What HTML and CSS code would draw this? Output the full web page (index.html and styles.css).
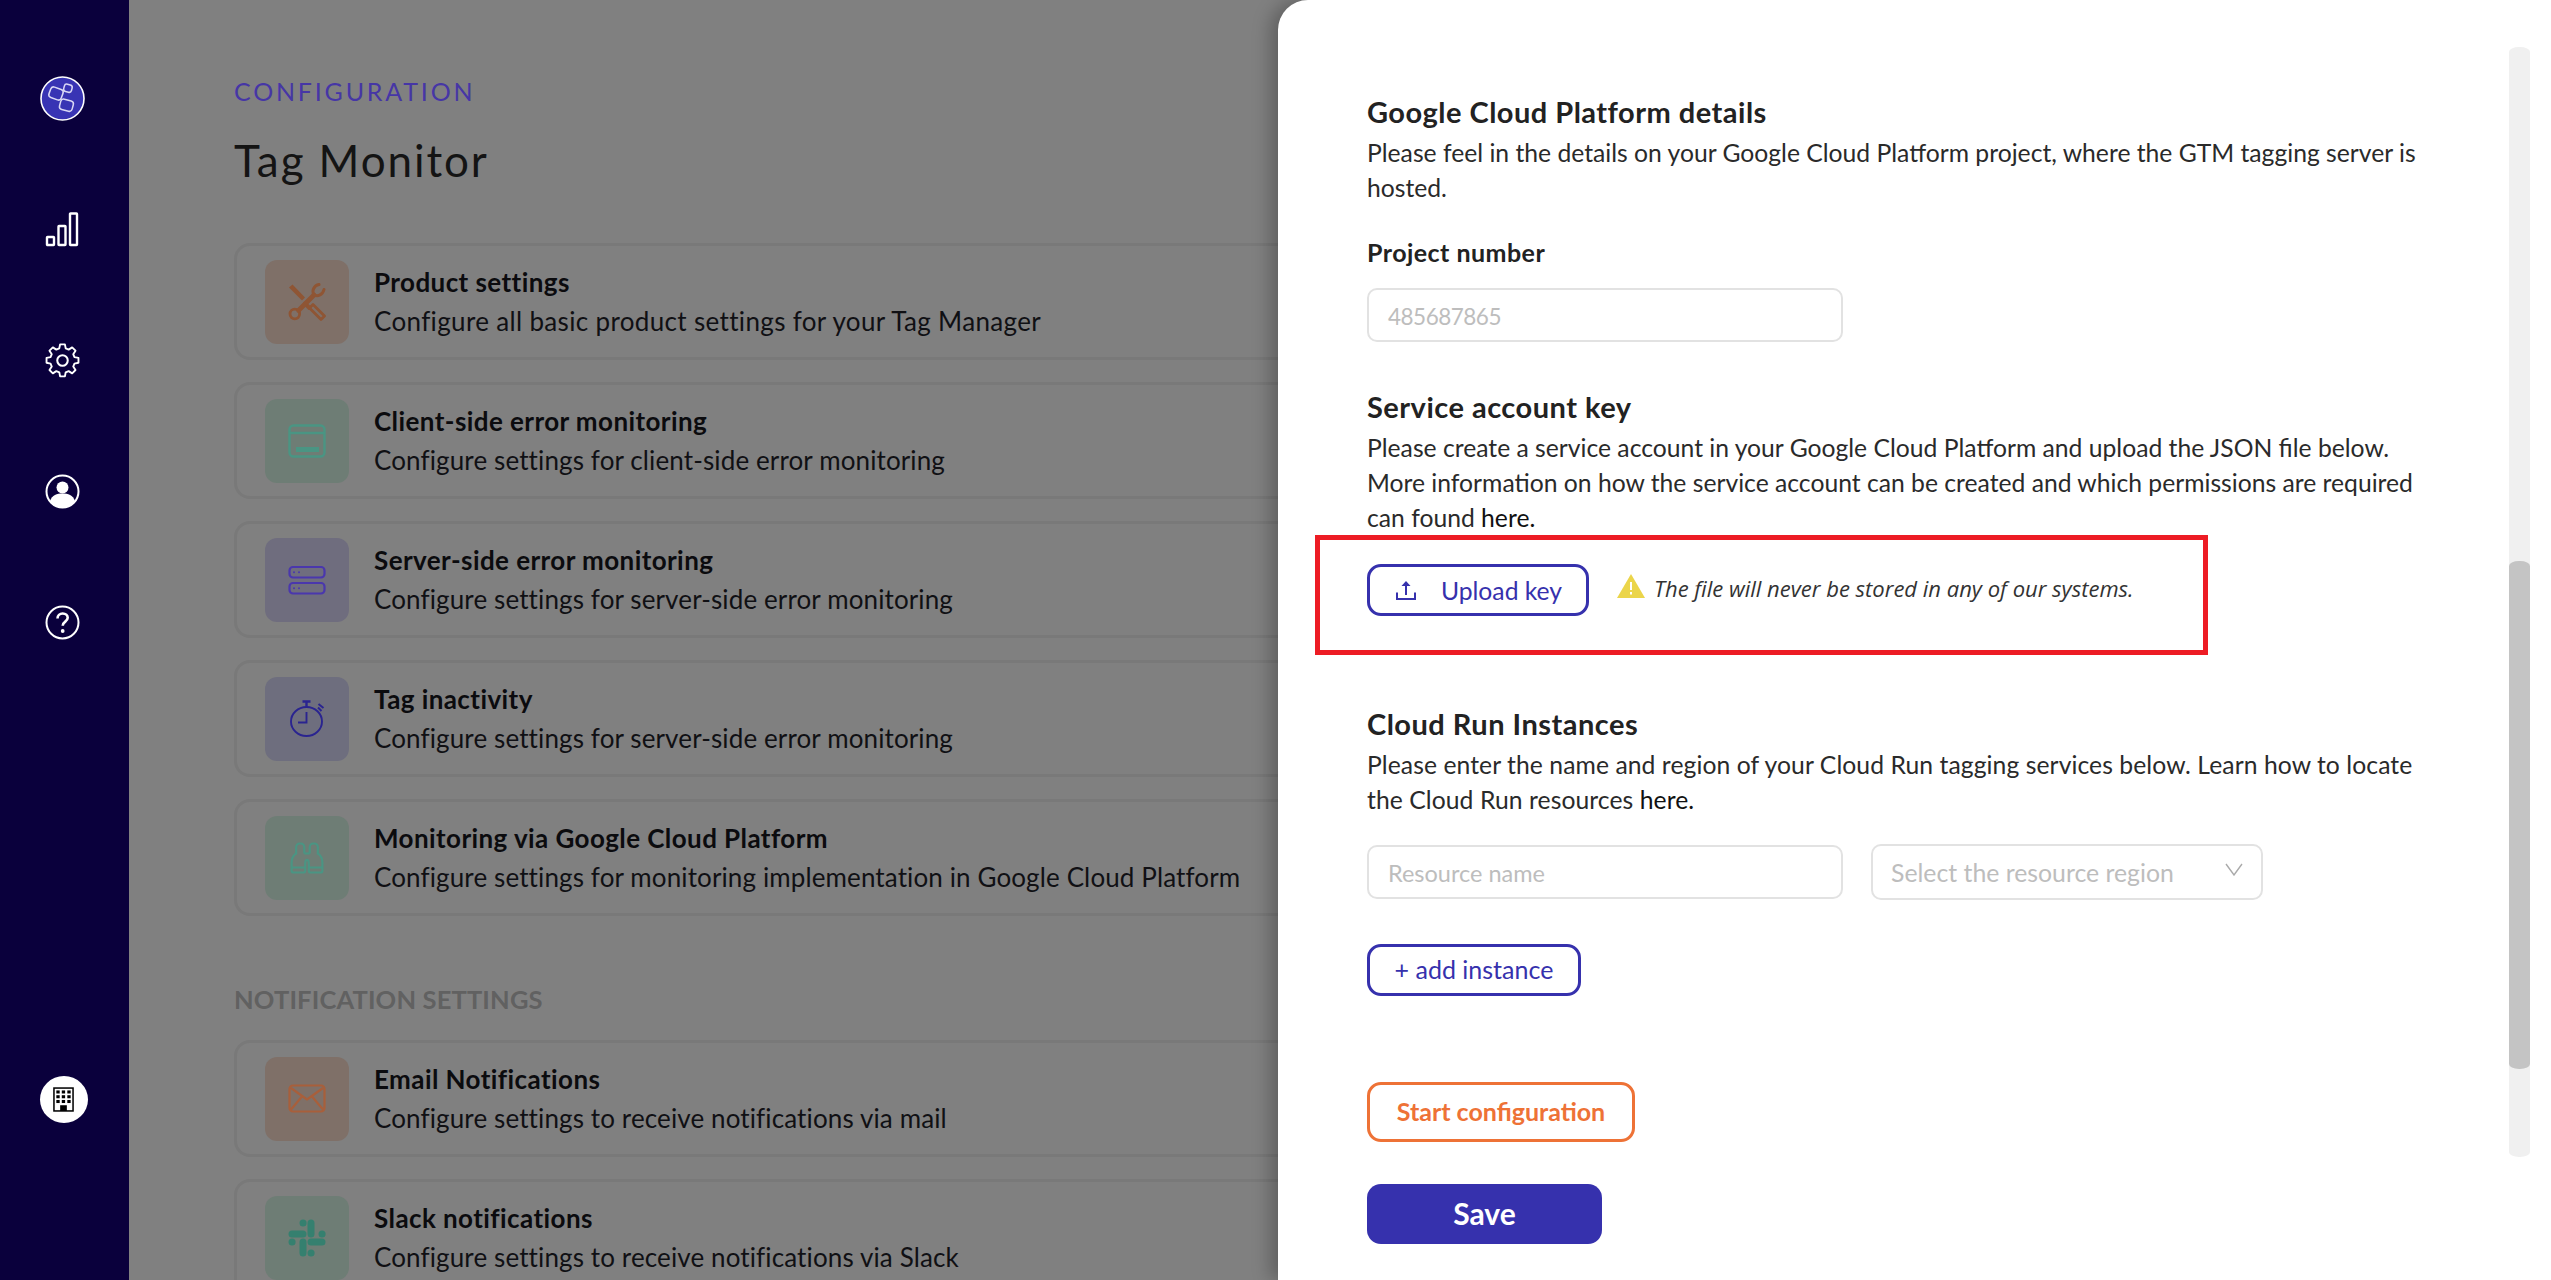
FILE: index.html
```html
<!DOCTYPE html>
<html lang="en">
<head>
<meta charset="utf-8">
<title>Tag Monitor</title>
<link rel="stylesheet" href="styles.css">
</head>
<body>
<div class="app">
  <nav class="sidebar">
    <svg class="nav-logo" viewBox="0 0 45 45"><circle cx="22.5" cy="22.5" r="21.5" fill="#3834b4" stroke="#fff" stroke-width="1.6"/><g fill="none" stroke="#d9d8f5" stroke-width="1.5"><rect x="9.5" y="12" width="13" height="11" rx="3" transform="rotate(20 16 17.5)"/><rect x="24" y="8.5" width="8" height="7.5" rx="2.5" transform="rotate(15 28 12)"/><rect x="20" y="24" width="13" height="10.5" rx="3" transform="rotate(15 26.5 29)"/></g></svg>
    <svg class="nav-icon" viewBox="0 0 35 35"><g fill="none" stroke="#fff" stroke-width="2.4"><rect x="2" y="25" width="7" height="8" rx=".5"/><rect x="13.500" y="14" width="7" height="19" rx=".5"/><rect x="25" y="1.500" width="7" height="31.500" rx=".5"/></g></svg>
    <svg class="nav-icon" viewBox="0 0 24 24"><g fill="none" stroke="#fff" stroke-width="1.4" stroke-linejoin="round"><circle cx="12" cy="12" r="3.6"/><path d="M10.2 1.5h3.6l.6 3 2.2.9 2.6-1.7 2.5 2.5-1.7 2.6.9 2.2 3 .6v3.6l-3 .6-.9 2.2 1.7 2.6-2.5 2.5-2.6-1.7-2.2.9-.6 3h-3.6l-.6-3-2.2-.9-2.6 1.7-2.5-2.5 1.7-2.6-.9-2.2-3-.6v-3.6l3-.6.9-2.2-1.7-2.6 2.5-2.5 2.6 1.7 2.2-.9z" transform="translate(12 12) scale(.92) translate(-12 -13.5)"/></g></svg>
    <svg class="nav-icon" viewBox="0 0 35 35"><circle cx="17.5" cy="17.5" r="16" fill="none" stroke="#fff" stroke-width="2"/><circle cx="17.5" cy="13.5" r="6" fill="#fff"/><path d="M5 27c2-6 7-7.500 12.500-7.500S28 21 30 27c-3 4-7.500 6.500-12.500 6.500S8 31 5 27z" fill="#fff"/></svg>
    <svg class="nav-icon" viewBox="0 0 35 35"><circle cx="17.5" cy="17.5" r="16" fill="none" stroke="#fff" stroke-width="2"/><path d="M12.500 13.500c0-3 2.200-5 5.200-5s5 1.800 5 4.300c0 4-5 3.700-5 8" fill="none" stroke="#fff" stroke-width="2.600"/><circle cx="17.700" cy="26" r="1.900" fill="#fff"/></svg>
    <div class="nav-org">
      <svg class="org-icon" viewBox="0 0 22 26"><rect x="1" y="1" width="20" height="24" fill="#fff" stroke="#000" stroke-width="1.600"/><g fill="#000"><rect x="3.500" y="3.500" width="3.500" height="3.200"/><rect x="9.200" y="3.500" width="3.500" height="3.200"/><rect x="15" y="3.500" width="3.500" height="3.200"/><rect x="3.500" y="8.500" width="3.500" height="3.200"/><rect x="9.200" y="8.500" width="3.500" height="3.200"/><rect x="15" y="8.500" width="3.500" height="3.200"/><rect x="3.500" y="13.500" width="3.500" height="3.200"/><rect x="9.200" y="13.500" width="3.500" height="3.200"/><rect x="15" y="13.500" width="3.500" height="3.200"/><rect x="7.500" y="19" width="7" height="6"/></g></svg>
    </div>
  </nav>

  <main class="main">
    <p class="eyebrow">CONFIGURATION</p>
    <h1 class="page-title">Tag Monitor</h1>
    <div class="card-list">
      <div class="card">
        <div class="tile tile-orange">
          <svg class="tile-icon" viewBox="0 0 38 38"><path d="M1 4.500L4.500 1.500 17 14.500 14 17.500z" fill="#8f5534"/><g fill="none" stroke="#8f5534" stroke-linecap="round" stroke-linejoin="round"><path d="M21.500 25l3.500-3.500 11.500 11.500-3.500 3.500z" stroke-width="2.800"/><path d="M17 20.500l4.500 4.500" stroke-width="4"/><circle cx="6.800" cy="31" r="4.800" stroke-width="2.800"/><path d="M10.500 27.500L26 12" stroke-width="4.600"/><path d="M31 1.500c-5 .8-7.500 6.500-5 10 3 2.500 8.500 1 10-5" stroke-width="3"/></g></svg>
        </div>
        <div class="card-text"><h3 class="card-title">Product settings</h3><p class="card-desc card-desc-wide">Configure all basic product settings for your Tag Manager</p></div>
      </div>
      <div class="card">
        <div class="tile tile-teal">
          <svg class="tile-icon" viewBox="0 0 38 38"><g fill="none" stroke="#4a9583" stroke-width="2.400"><rect x="1.500" y="3.500" width="35" height="31" rx="4"/><path d="M1.500 11h35"/></g><rect x="8" y="25" width="23" height="5" fill="#4a9583"/></svg>
        </div>
        <div class="card-text"><h3 class="card-title">Client-side error monitoring</h3><p class="card-desc">Configure settings for client-side error monitoring</p></div>
      </div>
      <div class="card">
        <div class="tile tile-purple">
          <svg class="tile-icon" viewBox="0 0 38 38"><g fill="none" stroke="#4a37ad" stroke-width="2.200"><rect x="1.500" y="6" width="35" height="10.500" rx="3.500"/><rect x="1.500" y="22" width="35" height="10.500" rx="3.500"/></g><g fill="#4a37ad"><circle cx="6" cy="11.200" r="1"/><circle cx="11" cy="11.200" r="1"/><circle cx="6" cy="27.200" r="1"/><circle cx="11" cy="27.200" r="1"/></g></svg>
        </div>
        <div class="card-text"><h3 class="card-title">Server-side error monitoring</h3><p class="card-desc">Configure settings for server-side error monitoring</p></div>
      </div>
      <div class="card">
        <div class="tile tile-indigo">
          <svg class="tile-icon" viewBox="0 0 38 38"><g fill="none" stroke="#2a2490" stroke-width="1.900"><ellipse cx="18.500" cy="21.500" rx="15.500" ry="14.500"/><path d="M18.500 12v10.500h-8.500"/><path d="M18.500 6.500V2M14.500 1.500h8" stroke-width="2.400"/><path d="M30 7.500l3.500 3.500M30.500 4l5 4" stroke-width="2"/></g></svg>
        </div>
        <div class="card-text"><h3 class="card-title">Tag inactivity</h3><p class="card-desc">Configure settings for server-side error monitoring</p></div>
      </div>
      <div class="card">
        <div class="tile tile-teal">
          <svg class="tile-icon" viewBox="-2 0 42 38"><g fill="none" stroke="#4a9583" stroke-width="2.400" stroke-linejoin="round"><path d="M7 15V7a4 4 0 0 1 4-4h1a4 4 0 0 1 4 4v7"/><path d="M22 14V7a4 4 0 0 1 4-4h1a4 4 0 0 1 4 4v8"/><path d="M16 14h6"/><path d="M7 14c-3.500 2.500-5 6-5 10v9a2 2 0 0 0 2 2h11a2 2 0 0 0 2-2v-8c0-2.500.5-4 2-4s2 1.500 2 4v8a2 2 0 0 0 2 2h11a2 2 0 0 0 2-2v-9c0-4-1.500-7.500-5-10"/><path d="M2 29.500h15M21 29.500h15"/></g></svg>
        </div>
        <div class="card-text"><h3 class="card-title">Monitoring via Google Cloud Platform</h3><p class="card-desc">Configure settings for monitoring implementation in Google Cloud Platform</p></div>
      </div>
    </div>
    <h2 class="section-label">NOTIFICATION SETTINGS</h2>
    <div class="card-list">
      <div class="card">
        <div class="tile tile-orange">
          <svg class="tile-icon" viewBox="0 0 38 38"><g fill="none" stroke="#a85f3b" stroke-width="2.200" stroke-linejoin="round"><rect x="1.500" y="5.500" width="35" height="26" rx="3.500"/><path d="M3 8l16 11.500L35 8M3 29.500l11-13M35 29.500l-11-13"/></g></svg>
        </div>
        <div class="card-text"><h3 class="card-title">Email Notifications</h3><p class="card-desc">Configure settings to receive notifications via mail</p></div>
      </div>
      <div class="card">
        <div class="tile tile-teal">
          <svg class="tile-icon" viewBox="0 0 38 38"><g fill="none" stroke="#35806f" stroke-width="7" stroke-linecap="round"><path d="M4 15h11M23 4v11M34 15h.1M4 23h.1M23 23h11M15 23v11M15 4h.1M23 34h.1"/></g></svg>
        </div>
        <div class="card-text"><h3 class="card-title">Slack notifications</h3><p class="card-desc">Configure settings to receive notifications via Slack</p></div>
      </div>
    </div>
  </main>

  <aside class="panel">
    <h2 class="panel-heading">Google Cloud Platform details</h2>
    <p class="panel-text">Please feel in the details on your Google Cloud Platform project, where the GTM tagging server is<br>hosted.</p>
    <label class="field-label">Project number</label>
    <div class="input input-project">485687865</div>

    <h2 class="panel-heading heading-key">Service account key</h2>
    <p class="panel-text">Please create a service account in your Google Cloud Platform and upload the JSON file below.<br>More information on how the service account can be created and which permissions are required<br>can found <span class="link">here.</span></p>
    <div class="upload-row">
      <div class="highlight"></div>
      <button class="btn btn-outline btn-upload">
        <svg class="upload-icon" viewBox="0 0 20 19"><g fill="none" stroke="#3631ad" stroke-width="2"><path d="M1 11.500V18h18v-6.500"/><path d="M10 14V3"/></g><path d="M10 0l4.500 5h-9z" fill="#3631ad"/></svg>
        Upload key
      </button>
      <svg class="warn-icon" viewBox="0 0 28 24"><path d="M14 0l14 24H0z" fill="#ebd54a"/><rect x="13" y="8" width="2" height="8" fill="#fff"/><rect x="13" y="18" width="2" height="2.500" fill="#fff"/></svg>
      <em class="upload-note">The file will never be stored in any of our systems.</em>
    </div>

    <h2 class="panel-heading heading-cloud">Cloud Run Instances</h2>
    <p class="panel-text panel-text-wide">Please enter the name and region of your Cloud Run tagging services below. Learn how to locate<br>the Cloud Run resources <span class="link">here.</span></p>
    <div class="instance-row">
      <div class="input input-resource">Resource name</div>
      <div class="select">
        <span>Select the resource region</span>
        <svg class="chevron" viewBox="0 0 18 13"><path d="M1 1l8 11 8-11" fill="none" stroke="#aaa" stroke-width="1.400"/></svg>
      </div>
    </div>
    <button class="btn btn-outline btn-add">+ add instance</button>
    <button class="btn btn-orange">Start configuration</button>
    <button class="btn btn-save">Save</button>
    <div class="scroll-track"><div class="scroll-thumb"></div></div>
  </aside>
</div>
</body>
</html>
```

FILE: styles.css
```css
* { box-sizing: border-box; }
html, body { margin: 0; height: 100%; overflow: hidden; }
body { font-family: "Lato", "Noto Sans", sans-serif; color: #222; background: #808080; }
p, h1, h2, h3 { margin: 0; font-weight: 400; }

.app { display: flex; width: 2551px; height: 1280px; position: relative; overflow: hidden; }

.sidebar { width: 129px; flex: none; height: 100%; background: #0a003c; display: flex; flex-direction: column; align-items: center; padding: 76px 4px 0 0; }
.nav-logo { width: 45px; height: 45px; }
.nav-icon { width: 35px; height: 35px; margin-top: 96px; }
.nav-logo + .nav-icon { margin-top: 90.5px; }
.nav-org { margin-top: auto; margin-bottom: 157px; margin-left: 2px; width: 48px; height: 47px; border-radius: 50%; background: #fff; display: flex; align-items: center; justify-content: center; }
.org-icon { width: 21px; height: 27px; }

.main { flex: none; width: 1600px; padding-left: 105px; background: #808080; }
.eyebrow { margin-top: 76px; height: 30px; line-height: 30px; font-size: 25px; letter-spacing: 2.8px; color: #4636a6; }
.page-title { margin-top: 29px; height: 50px; line-height: 50px; font-size: 44px; letter-spacing: 1.9px; color: #141414; }
.card-list { display: flex; flex-direction: column; gap: 22px; }
.page-title + .card-list { margin-top: 58px; }
.card { height: 117px; display: flex; align-items: center; gap: 25px; padding-left: 28px; border: 3px solid #797979; border-radius: 16px; }
.tile { width: 84px; height: 84px; flex: none; border-radius: 12px; display: flex; align-items: center; justify-content: center; }
.tile-orange { background: #7f7068; }
.tile-teal { background: #6e7d75; }
.tile-purple { background: #6f6d7e; }
.tile-indigo { background: #6e6e7e; }
.tile-icon { width: 38px; height: 38px; }
.card-text { display: flex; flex-direction: column; gap: 2px; }
.card-title { font-size: 26px; line-height: 36px; font-weight: 700; letter-spacing: .42px; color: #0b0b0e; }
.card-desc { font-size: 26px; line-height: 38px; letter-spacing: .12px; color: #101014; }
.card-desc-wide { letter-spacing: .34px; }
.section-label { margin-top: 65px; margin-bottom: 23px; height: 36px; line-height: 36px; font-size: 25.5px; font-weight: 700; letter-spacing: .15px; color: #616161; }

.panel { position: absolute; top: 0; right: 0; bottom: 0; left: 1278px; background: #fff; border-top-left-radius: 30px; padding: 94px 0 0 89px; box-shadow: -8px 0 18px rgba(0,0,0,.25); display: flex; flex-direction: column; align-items: flex-start; }
.panel-heading { height: 36px; line-height: 36px; font-size: 29px; font-weight: 700; letter-spacing: .48px; color: #222; margin-bottom: 5px; }
.panel-text { font-size: 24.7px; line-height: 35px; color: #2a2a2a; white-space: nowrap; }
.panel-text-wide { letter-spacing: .07px; }
.link { color: #111; }
.field-label { margin-top: 29px; height: 36px; line-height: 36px; font-size: 25px; font-weight: 700; letter-spacing: .46px; color: #222; }
.input { width: 476px; height: 54px; border: 2px solid #e2e2e2; border-radius: 10px; padding: 2px 0 0 19px; display: flex; align-items: center; font-size: 23.5px; color: #bdbdbd; }
.input-project { margin-top: 18px; font-size: 22.5px; letter-spacing: -.5px; }
.heading-key { margin-top: 47px; }
.heading-cloud { margin-top: 90px; }

.upload-row { margin-top: 29px; position: relative; display: flex; align-items: center; height: 52px; }
.highlight { position: absolute; left: -52px; top: -29px; width: 893px; height: 120px; border: 5px solid #ed1c24; }
.btn { font-family: inherit; background: #fff; cursor: pointer; display: flex; align-items: center; justify-content: center; border-radius: 14px; font-size: 25px; }
.btn-outline { border: 3px solid #3631ad; color: #3631ad; }
.btn-upload { width: 222px; height: 52px; gap: 25px; padding: 0 0 0 2px; font-size: 24.7px; }
.upload-icon { width: 20px; height: 19px; }
.warn-icon { width: 28px; height: 24px; margin-left: 28px; margin-top: -8px; }
.upload-note { margin-left: 9px; font-family: "Open Sans", sans-serif; font-size: 22px; color: #333; margin-top: -5px; }

.instance-row { margin-top: 27px; display: flex; align-items: center; gap: 28px; }
.select { width: 392px; height: 56px; border: 2px solid #e2e2e2; border-radius: 10px; padding: 1px 18px 0; display: flex; align-items: center; justify-content: space-between; font-size: 24.8px; color: #bdbdbd; }
.chevron { width: 18px; height: 13px; margin-top: -6px; }
.btn-add { margin-top: 44px; width: 214px; height: 52px; padding: 0 0 2px; }
.btn-orange { margin-top: 86px; width: 268px; height: 60px; padding: 0 0 2px; border: 3px solid #ee7236; color: #ee7236; font-weight: 700; }
.btn-save { margin-top: 42px; width: 235px; height: 60px; padding: 0 0 2px; border: 0; background: #3631ad; color: #fff; font-size: 30px; font-weight: 700; }

.scroll-track { position: absolute; left: 1231px; top: 47px; width: 21px; height: 1110px; border-radius: 10px / 5px; background: #f0f0f0; }
.scroll-thumb { position: absolute; left: 0; top: 514px; width: 21px; height: 508px; border-radius: 10px / 5px; background: #c4c4c4; }
```
